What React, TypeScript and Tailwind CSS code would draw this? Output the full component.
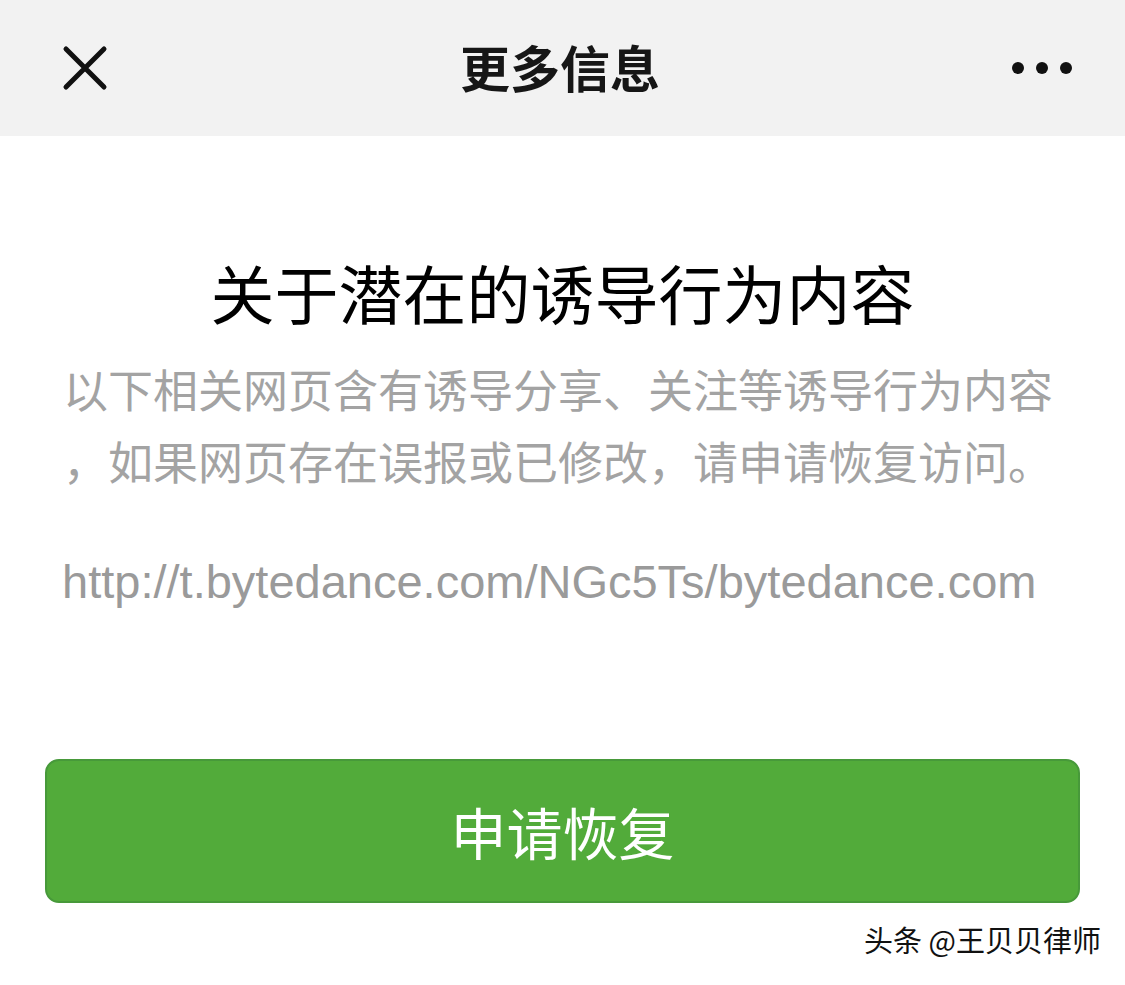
const cjk = '[font-family:"Noto_Sans_CJK_SC","Noto_Sans",sans-serif]';

function CloseIcon() {
  return (
    <svg width="48" height="48" viewBox="0 0 48 48" className="block">
      <path d="M5 5 L43 43 M43 5 L5 43" stroke="#111" strokeWidth="5" strokeLinecap="round" fill="none" />
    </svg>
  );
}

function MoreIcon() {
  return (
    <svg width="62" height="14" viewBox="0 0 62 14" className="block">
      <circle cx="7" cy="7" r="6" fill="#111" />
      <circle cx="31" cy="7" r="6" fill="#111" />
      <circle cx="55" cy="7" r="6" fill="#111" />
    </svg>
  );
}

export default function App() {
  return (
    <div className={`w-[1125px] h-[985px] bg-white overflow-hidden flex flex-col ${cjk}`}>
      <header className="h-[136px] shrink-0 bg-[#f2f2f2] flex items-center justify-between pl-[61px] pr-[52px]">
        <CloseIcon />
        <h1 className="text-[50px] font-bold text-[#161616] leading-none -mt-[4px]">更多信息</h1>
        <MoreIcon />
      </header>

      <main className="flex flex-col px-[62px] shrink-0">
        <h2 className="mt-[115px] text-center text-[64px] leading-[80px] text-black">关于潜在的诱导行为内容</h2>
        <p className="mt-[22px] ml-[1px] text-[45px] leading-[72px] text-[#a3a3a3] whitespace-nowrap">
          以下相关网页含有诱导分享、关注等诱导行为内容
          <br />
          ，如果网页存在误报或已修改，请申请恢复访问。
        </p>
        <p className='mt-[60px] text-[47px] leading-[50px] text-[#9a9a9a] whitespace-nowrap [font-family:"Liberation_Sans",Arial,sans-serif]'>
          http://t.bytedance.com/NGc5Ts/bytedance.com
        </p>
      </main>

      <div className="px-[45px] mt-[152px] shrink-0">
        <button
          type="button"
          className="w-full h-[144px] rounded-[14px] bg-[#52ab3a] border-2 border-[#47993a] text-white text-[56px] flex items-center justify-center"
        >
          申请恢复
        </button>
      </div>

      <div className="flex justify-end pr-[24px] mt-[16px] shrink-0">
        <span className="text-[29px] leading-[40px] text-[#111] [text-shadow:0_0_2px_#fff,1px_1px_0_#fff]">
          头条 @王贝贝律师
        </span>
      </div>
    </div>
  );
}
